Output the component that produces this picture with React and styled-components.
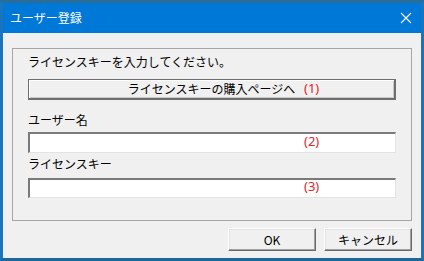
import React from "react";
import styled, { createGlobalStyle } from "styled-components";

const Global = createGlobalStyle`
  html, body {
    margin: 0;
    padding: 0;
    background: #1d6ea8;
  }
  body {
    font-family: "Noto Sans CJK JP", "Noto Sans", sans-serif;
  }
`;

const Frame = styled.div`
  width: 424px;
  height: 261px;
  box-sizing: border-box;
  border: 3px solid #1a75bd;
  border-top-color: #2a6d96;
  border-bottom-color: #1d6699;
  display: flex;
  flex-direction: column;
  background: #f0f0f0;
`;

const TitleBar = styled.div`
  height: 30px;
  flex: none;
  background: #0078d7;
  color: #fff;
  display: flex;
  align-items: center;
  justify-content: space-between;
  padding: 0 9px 0 7px;
  font-size: 12px;
  line-height: 14px;
`;

const CloseIcon = () => (
  <svg width="12" height="12" viewBox="0 0 12 12">
    <path d="M1 1 L11 11 M11 1 L1 11" stroke="#fff" strokeWidth="1.1" fill="none" />
  </svg>
);

const Client = styled.div`
  flex: 1;
  display: flex;
  flex-direction: column;
  padding: 15px 9px 8px 9px;
  font-size: 12px;
  color: #000;
`;

const Group = styled.div`
  height: 173px;
  box-sizing: border-box;
  border: 1px solid #a6a6a6;
  padding: 6px 15px 0 15px;
  display: flex;
  flex-direction: column;
`;

const Label = styled.div`
  line-height: 14px;
  height: 14px;
  margin-top: ${(p) => p.$gap || 0}px;
`;

const Slot = styled.div`
  position: relative;
  margin-top: ${(p) => p.$gap || 0}px;
`;

const LinkButton = styled.div`
  height: 21px;
  box-sizing: border-box;
  border: 1px solid #6e6e6e;
  border-right-width: 2px;
  border-bottom-width: 2px;
  box-shadow: inset 1px 1px 0 #fdfdfd, inset -1px -1px 0 #c8c8c8;
  background: #f0f0f0;
  display: flex;
  align-items: center;
  justify-content: center;
  line-height: 14px;
`;

const Input = styled.div`
  height: ${(p) => p.$h}px;
  box-sizing: border-box;
  background: #fff;
  border-top: 2px solid #7a7a7a;
  border-left: 2px solid #7a7a7a;
  border-right: 1px solid #e3e3e3;
  border-bottom: 1px solid #e3e3e3;
`;

const Note = styled.span`
  position: absolute;
  left: 276px;
  top: 50%;
  transform: translateY(-62%);
  color: #e0242c;
  font-family: "Noto Sans", sans-serif;
  font-size: 13px;
  line-height: 14px;
`;

const Actions = styled.div`
  margin-top: 7px;
  display: flex;
  justify-content: flex-end;
  gap: 8px;
`;

const Button = styled.div`
  width: 88px;
  height: 23px;
  box-sizing: border-box;
  background: #f0f0f0;
  border-top: 1px solid #fff;
  border-left: 1px solid #fff;
  border-right: 1px solid #696969;
  border-bottom: 1px solid #696969;
  box-shadow: inset -1px -1px 0 #a0a0a0, inset 1px 1px 0 #e3e3e3;
  display: flex;
  align-items: center;
  justify-content: center;
  line-height: 14px;
`;

export default function App() {
  return (
    <>
      <Global />
      <Frame>
        <TitleBar>
          <span>ユーザー登録</span>
          <CloseIcon />
        </TitleBar>
        <Client>
          <Group>
            <Label>ライセンスキーを入力してください。</Label>
            <Slot $gap={10}>
              <LinkButton>ライセンスキーの購入ページへ</LinkButton>
              <Note>(1)</Note>
            </Slot>
            <Label $gap={13}>ユーザー名</Label>
            <Slot $gap={5}>
              <Input $h={21} />
              <Note>(2)</Note>
            </Slot>
            <Label $gap={4}>ライセンスキー</Label>
            <Slot $gap={7}>
              <Input $h={20} />
              <Note>(3)</Note>
            </Slot>
          </Group>
          <Actions>
            <Button>OK</Button>
            <Button>キャンセル</Button>
          </Actions>
        </Client>
      </Frame>
    </>
  );
}
